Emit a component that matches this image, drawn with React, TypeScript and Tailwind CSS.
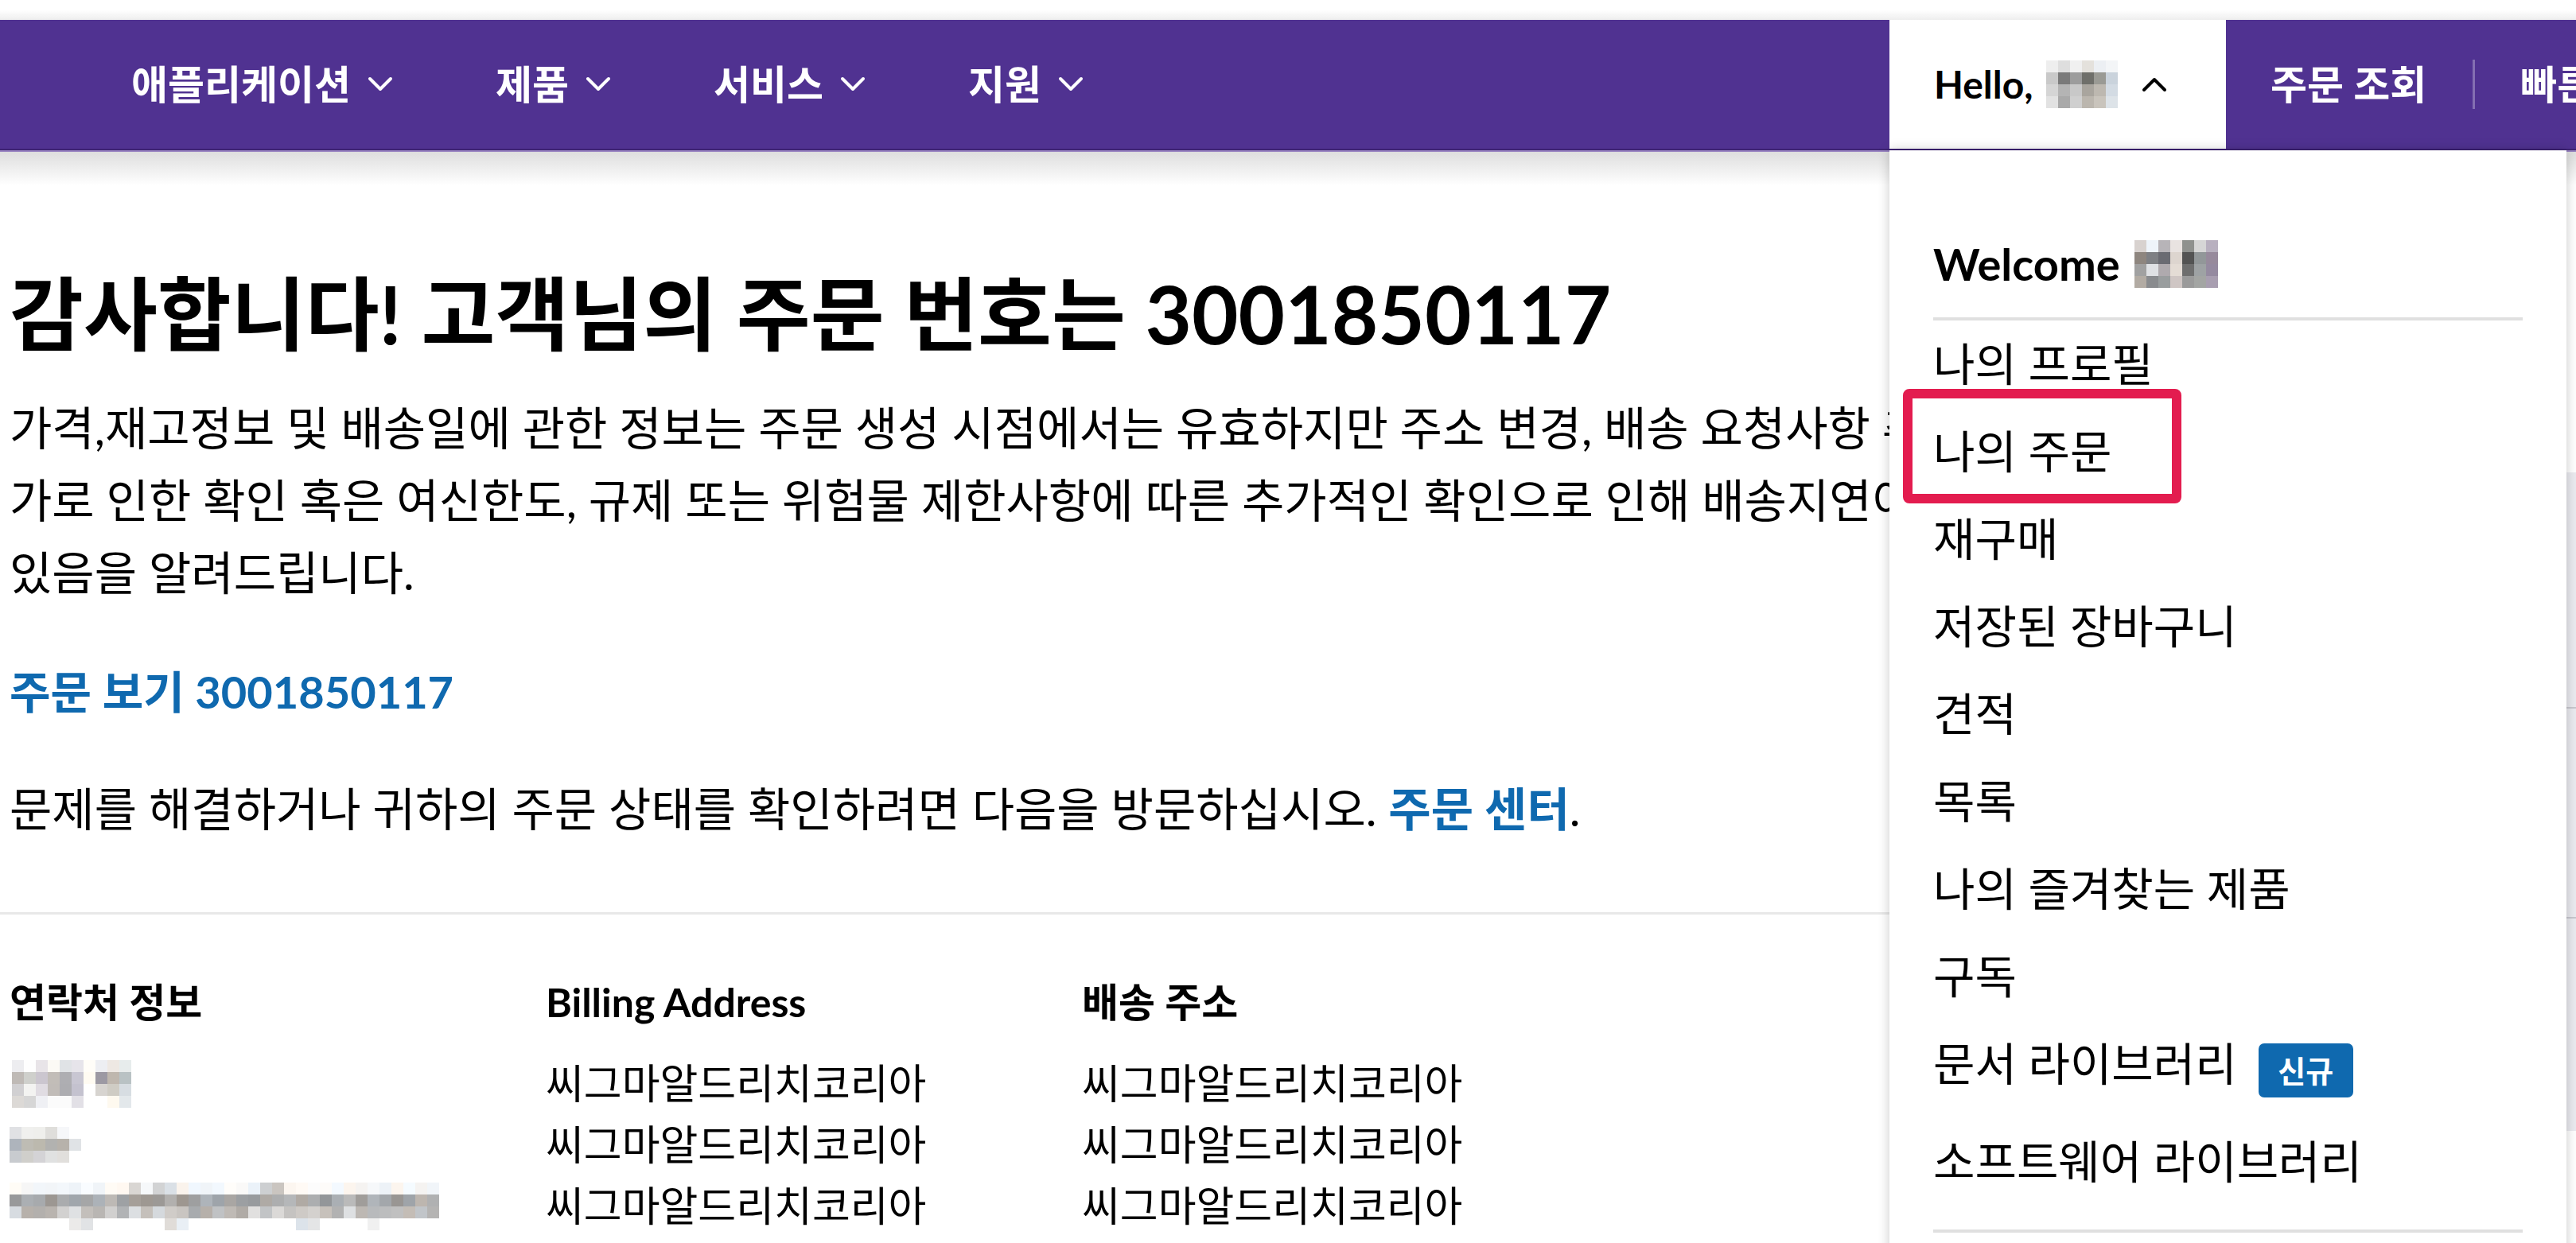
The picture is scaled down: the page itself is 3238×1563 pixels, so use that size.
import type { ReactNode } from "react";

type Rows = string[][];

const HELLO_BLUR: Rows = [
  ["#eeeeee", "#dedede", "#f0f0f0", "#e4e1dc", "#eceff3", "#f3f5f7"],
  ["#c9c9c9", "#7a7a7a", "#9c9c9c", "#6f6f6a", "#9a9a94", "#cad3dc"],
  ["#d5d5d5", "#b4b4b4", "#c8c8c8", "#a9a59e", "#bdb8b0", "#d3dbe3"],
  ["#e2e2e2", "#a9a9a9", "#cfcfcf", "#bbb6ae", "#c9c4bc", "#dde3e8"],
];

const WELCOME_BLUR: Rows = [
  ["#d8d2cf", "#eef4fa", "#b7b4b8", "#e9e3e1", "#8f918e", "#d6d6d6", "#b8b0bf"],
  ["#8e867f", "#7e8084", "#6a6b72", "#ddd5cf", "#535353", "#929799", "#978a9c"],
  ["#a1a1a1", "#dfe1e4", "#afaaae", "#e4dcd5", "#6e6e6e", "#9ea2a4", "#958aa0"],
  ["#b2aba3", "#898b8e", "#999d9e", "#cfc6c4", "#9a9a9a", "#a3a5a3", "#a89eb0"],
];

const NAME_BLUR: Rows = [
  ["#ededf0", "#fefefe", "#e8e4e8", "#fcfaf5", "#e0e3e6", "#e6e4ea", "#fffdf8", "#edeef2", "#eee8e3", "#e7ecec"],
  ["#bfbab6", "#cfd0cc", "#cbc6cf", "#c2bdb8", "#aeaeb2", "#c8c6d2", "#fffbf2", "#9c99a3", "#bfb7ae", "#b9c2c4"],
  ["#d1d0d2", "#f3f3f1", "#e0dce2", "#c1bcb8", "#adadb1", "#c4c2cf", "#ffffff", "#d7d4d0", "#cfccc4", "#d7dde2"],
  ["#dcd9d6", "#d6d6d6", "#eff0f4", "#fbfbfb", "#fbfbfb", "#e2e0e6", "#ffffff", "#ffffff", "#fef9ef", "#e3e8eb"],
];

const PHONE_BLUR: Rows = [
  ["#e0e1e4", "#f0f0ee", "#efefec", "#dfdedb", "#f6f7f9", ""],
  ["#aeb4bc", "#bebcb4", "#bcb9ae", "#b2b2b0", "#b7b2ab", "#e0e3e6"],
  ["#c8cbcf", "#d0cfcb", "#d4d3d6", "#e0e1e1", "#e1dfdc", ""],
];

// email line: 36 cells wide, seeded so it stays the same each run
function emailBlur(): Rows {
  let s = 17;
  const rnd = () => {
    s = (s * 9301 + 49297) % 233280;
    return s / 233280;
  };
  const grey = (lo: number, hi: number) => {
    const v = Math.round(lo + rnd() * (hi - lo));
    const t = Math.round((rnd() - 0.5) * 14);
    const r = Math.min(255, Math.max(0, v + t));
    const b = Math.min(255, Math.max(0, v - t));
    return `rgb(${r},${v},${b})`;
  };
  const top: string[] = [];
  const mid: string[] = [];
  const low: string[] = [];
  const bottom: string[] = [];
  for (let i = 0; i < 36; i++) {
    top.push([10, 12, 13, 21, 22].includes(i) ? grey(195, 225) : grey(242, 253));
    mid.push(grey(150, 190));
    low.push(grey(170, 225));
    bottom.push([5, 6, 13, 14, 24, 25, 30].includes(i) ? grey(215, 245) : "");
  }
  return [top, mid, low, bottom];
}

function Mosaic({ rows, cell = 15, className = "" }: { rows: Rows; cell?: number; className?: string }) {
  const cols = Math.max(...rows.map((r) => r.length));
  return (
    <svg
      width={cols * cell}
      height={rows.length * cell}
      className={`shrink-0 ${className}`}
      aria-hidden
    >
      {rows.map((r, y) =>
        r.map((c, x) =>
          c ? <rect key={`${x}-${y}`} x={x * cell} y={y * cell} width={cell} height={cell} fill={c} /> : null,
        ),
      )}
    </svg>
  );
}

function Chevron({ up = false, color = "white" }: { up?: boolean; color?: string }) {
  return (
    <svg width="32" height="20" viewBox="0 0 32 20" className="shrink-0" aria-hidden>
      <polyline
        points={up ? "3,17 16,4 29,17" : "3,3 16,16 29,3"}
        fill="none"
        stroke={color}
        strokeWidth="4"
        strokeLinecap="round"
        strokeLinejoin="round"
      />
    </svg>
  );
}

function NavItem({ children }: { children: ReactNode }) {
  return (
    <span className="flex items-center gap-[21px] text-[50px] font-bold text-white">
      {children}
      <Chevron />
    </span>
  );
}

const MENU = [
  "나의 프로필",
  "나의 주문",
  "재구매",
  "저장된 장바구니",
  "견적",
  "목록",
  "나의 즐겨찾는 제품",
  "구독",
];

const ADDRESS = ["씨그마알드리치코리아", "씨그마알드리치코리아", "씨그마알드리치코리아"];

export default function App() {
  const email = emailBlur();
  return (
    <div className="relative h-[1563px] w-[3238px] overflow-hidden bg-white font-[family-name:Lato,'Noto_Sans_CJK_KR',sans-serif] text-black">
      <div className="h-[25px] bg-linear-to-b from-white via-white to-[#eeeeee]" />

      <nav className="flex h-[164px] items-center overflow-hidden whitespace-nowrap border-b-[2px] border-[#3d2273] bg-[#503291]">
        <div className="flex w-[2375px] shrink-0 items-center gap-[129px] pl-[165px]">
          <NavItem>애플리케이션</NavItem>
          <NavItem>제품</NavItem>
          <NavItem>서비스</NavItem>
          <NavItem>지원</NavItem>
        </div>
        <div className="flex h-full w-[423px] shrink-0 items-center bg-white pl-[56px] text-[48px] font-bold">
          Hello,
          <Mosaic rows={HELLO_BLUR} className="ml-[16px]" />
          <span className="ml-[30px]">
            <Chevron up color="black" />
          </span>
        </div>
        <span className="ml-[56px] shrink-0 text-[50px] font-bold text-white">주문 조회</span>
        <span className="ml-[58px] h-[62px] w-[3px] shrink-0 bg-white/30" />
        <span className="ml-[57px] shrink-0 text-[50px] font-bold text-white">빠른 주문</span>
      </nav>
      <div className="h-[2px] bg-[#9a86c2]" />
      <div className="h-[42px] bg-linear-to-b from-[#dedede] to-white" />

      <main className="flex">
        <div className="w-[2375px] shrink-0 pl-[12px]">
          <h1 className="mt-[103px] whitespace-nowrap text-[101px] font-bold leading-[116px]">
            감사합니다! 고객님의 주문 번호는 3001850117
          </h1>
          <p className="mt-[40px] whitespace-nowrap text-[58px] leading-[91px]">
            가격,재고정보 및 배송일에 관한 정보는 주문 생성 시점에서는 유효하지만 주소 변경, 배송 요청사항 추
            <br />
            가로 인한 확인 혹은 여신한도, 규제 또는 위험물 제한사항에 따른 추가적인 확인으로 인해 배송지연이
            <br />
            있음을 알려드립니다.
          </p>
          <p className="mt-[59px] text-[56px] font-bold leading-[91px] text-[#0f69af]">
            주문 보기 3001850117
          </p>
          <p className="mt-[56px] whitespace-nowrap text-[58px] leading-[91px]">
            문제를 해결하거나 귀하의 주문 상태를 확인하려면 다음을 방문하십시오.{" "}
            <span className="font-bold text-[#0f69af]">주문 센터</span>.
          </p>
          <div className="-ml-[12px] mt-[85px] h-[3px] bg-[#e8e8e8]" />

          <div className="mt-[80px] grid grid-cols-[674px_674px_674px]">
            <div>
              <h3 className="text-[50px] font-bold leading-[60px]">연락처 정보</h3>
              <ul className="mt-[34px]">
                <li className="flex h-[77px] items-center">
                  <Mosaic rows={NAME_BLUR} className="ml-[3px]" />
                </li>
                <li className="flex h-[77px] items-center">
                  <Mosaic rows={PHONE_BLUR} />
                </li>
                <li className="flex h-[77px] items-center">
                  <Mosaic rows={email} />
                </li>
              </ul>
            </div>
            <div>
              <h3 className="text-[50px] font-bold leading-[60px]">Billing Address</h3>
              <ul className="mt-[34px] text-[52px] leading-[77px]">
                {ADDRESS.map((a, i) => (
                  <li key={i}>{a}</li>
                ))}
              </ul>
            </div>
            <div>
              <h3 className="text-[50px] font-bold leading-[60px]">배송 주소</h3>
              <ul className="mt-[34px] text-[52px] leading-[77px]">
                {ADDRESS.map((a, i) => (
                  <li key={i}>{a}</li>
                ))}
              </ul>
            </div>
          </div>
        </div>

        <aside className="ml-auto w-[700px]">
          <div className="mt-[361px] h-[828px] bg-[#ebebf0] pt-[295px]">
            <div className="h-[2px] bg-[#c9c9d0]" />
            <div className="mt-[262px] h-[2px] bg-[#c9c9d0]" />
          </div>
        </aside>
      </main>

      {/* open account menu */}
      <div className="absolute left-[2375px] top-[189px] z-20 h-[1400px] w-[851px] bg-white px-[55px] shadow-[0_0_14px_rgba(0,0,0,0.22)]">
        <div className="mt-[108px] flex h-[70px] items-center">
          <span className="text-[56px] font-bold leading-[70px]">Welcome</span>
          <Mosaic rows={WELCOME_BLUR} className="ml-[18px]" />
        </div>
        <div className="mt-[32px] h-[4px] bg-[#e0e0e0]" />
        <ul className="text-[57px]">
          {MENU.map((m) => (
            <li key={m} className="relative flex h-[110px] items-center whitespace-nowrap">
              {m}
              {m === "나의 주문" ? (
                <span className="absolute -left-[38px] -top-[24px] h-[144px] w-[350px] rounded-[8px] border-[12px] border-[#e31c4f]" />
              ) : null}
            </li>
          ))}
          <li className="mb-[13px] flex h-[110px] items-center whitespace-nowrap">
            문서 라이브러리
            <span className="ml-[27px] mt-[16px] flex h-[68px] w-[119px] items-center justify-center rounded-[7px] bg-[#0f69af] text-[38px] font-bold text-white">
              신규
            </span>
          </li>
          <li className="flex h-[110px] items-center whitespace-nowrap">소프트웨어 라이브러리</li>
        </ul>
        <div className="mt-[30px] h-[4px] bg-[#e0e0e0]" />
      </div>
    </div>
  );
}
